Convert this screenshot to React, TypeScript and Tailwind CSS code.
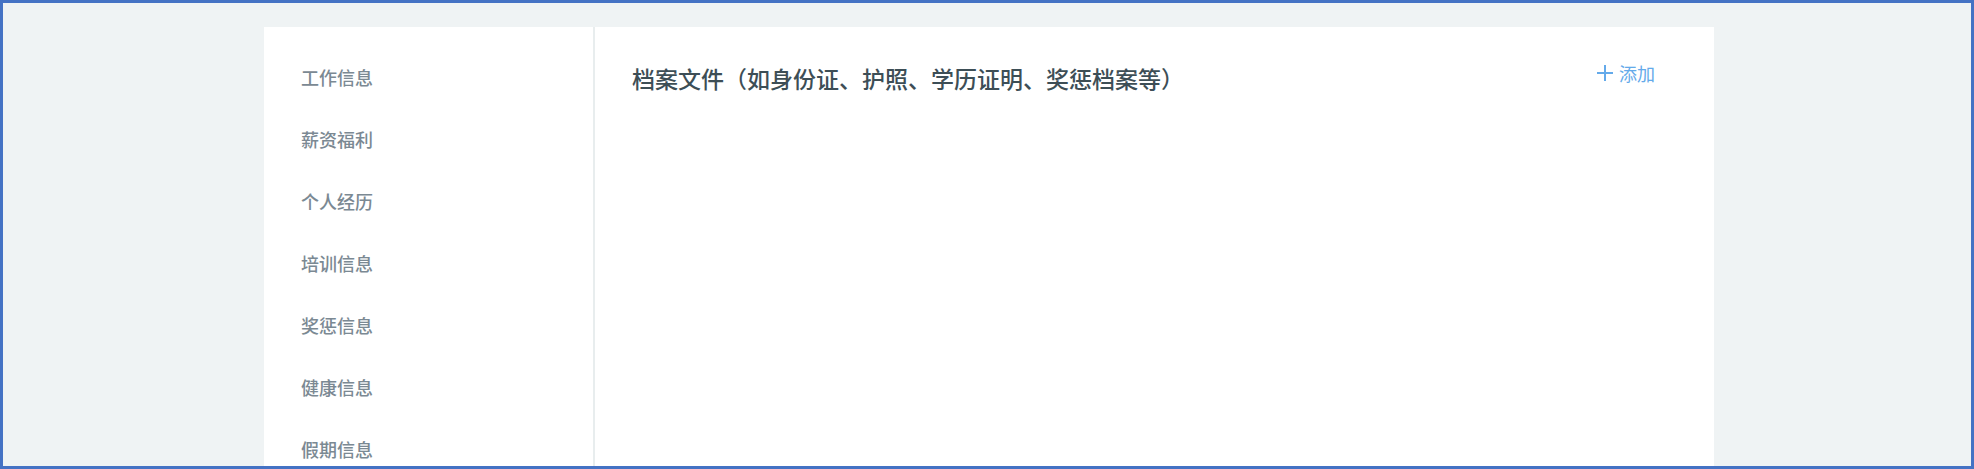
const sections = ["工作信息", "薪资福利", "个人经历", "培训信息", "奖惩信息", "健康信息", "假期信息"];

function PlusIcon() {
  return (
    <svg className="size-4" viewBox="0 0 16 16" fill="none" stroke="currentColor" strokeWidth="2" aria-hidden="true">
      <path d="M8 0V16M0 8H16" />
    </svg>
  );
}

function Sidebar() {
  return (
    <nav aria-label="档案" className="w-[331px] shrink-0 border-r-2 border-[#e8edee] px-[37px] pt-9">
      <ul className="flex flex-col gap-[34px]">
        {sections.map((name) => (
          <li key={name} className="flex h-7 items-center">
            <a href="#" className="text-[18px] leading-7 font-medium text-[#7b8993]">
              {name}
            </a>
          </li>
        ))}
      </ul>
    </nav>
  );
}

export default function App() {
  return (
    <div className="flex min-h-screen border-[3px] border-[#4472c4] bg-[#eff3f4] pt-6 pl-1 font-['Noto_Sans_CJK_SC',sans-serif]">
      <div className="mx-auto flex w-full max-w-[1450px] bg-white">
        <Sidebar />
        <main className="flex flex-1 items-start justify-between pt-8 pr-[59px] pl-[37px]">
          <h1 className="mt-[3px] text-[23px] leading-8 font-medium text-[#3d4e56]">
            档案文件（如身份证、护照、学历证明、奖惩档案等）
          </h1>
          <button type="button" className="flex items-center gap-1.5 text-[18px] leading-7 text-[#64aaea]">
            <PlusIcon />
            添加
          </button>
        </main>
      </div>
    </div>
  );
}
